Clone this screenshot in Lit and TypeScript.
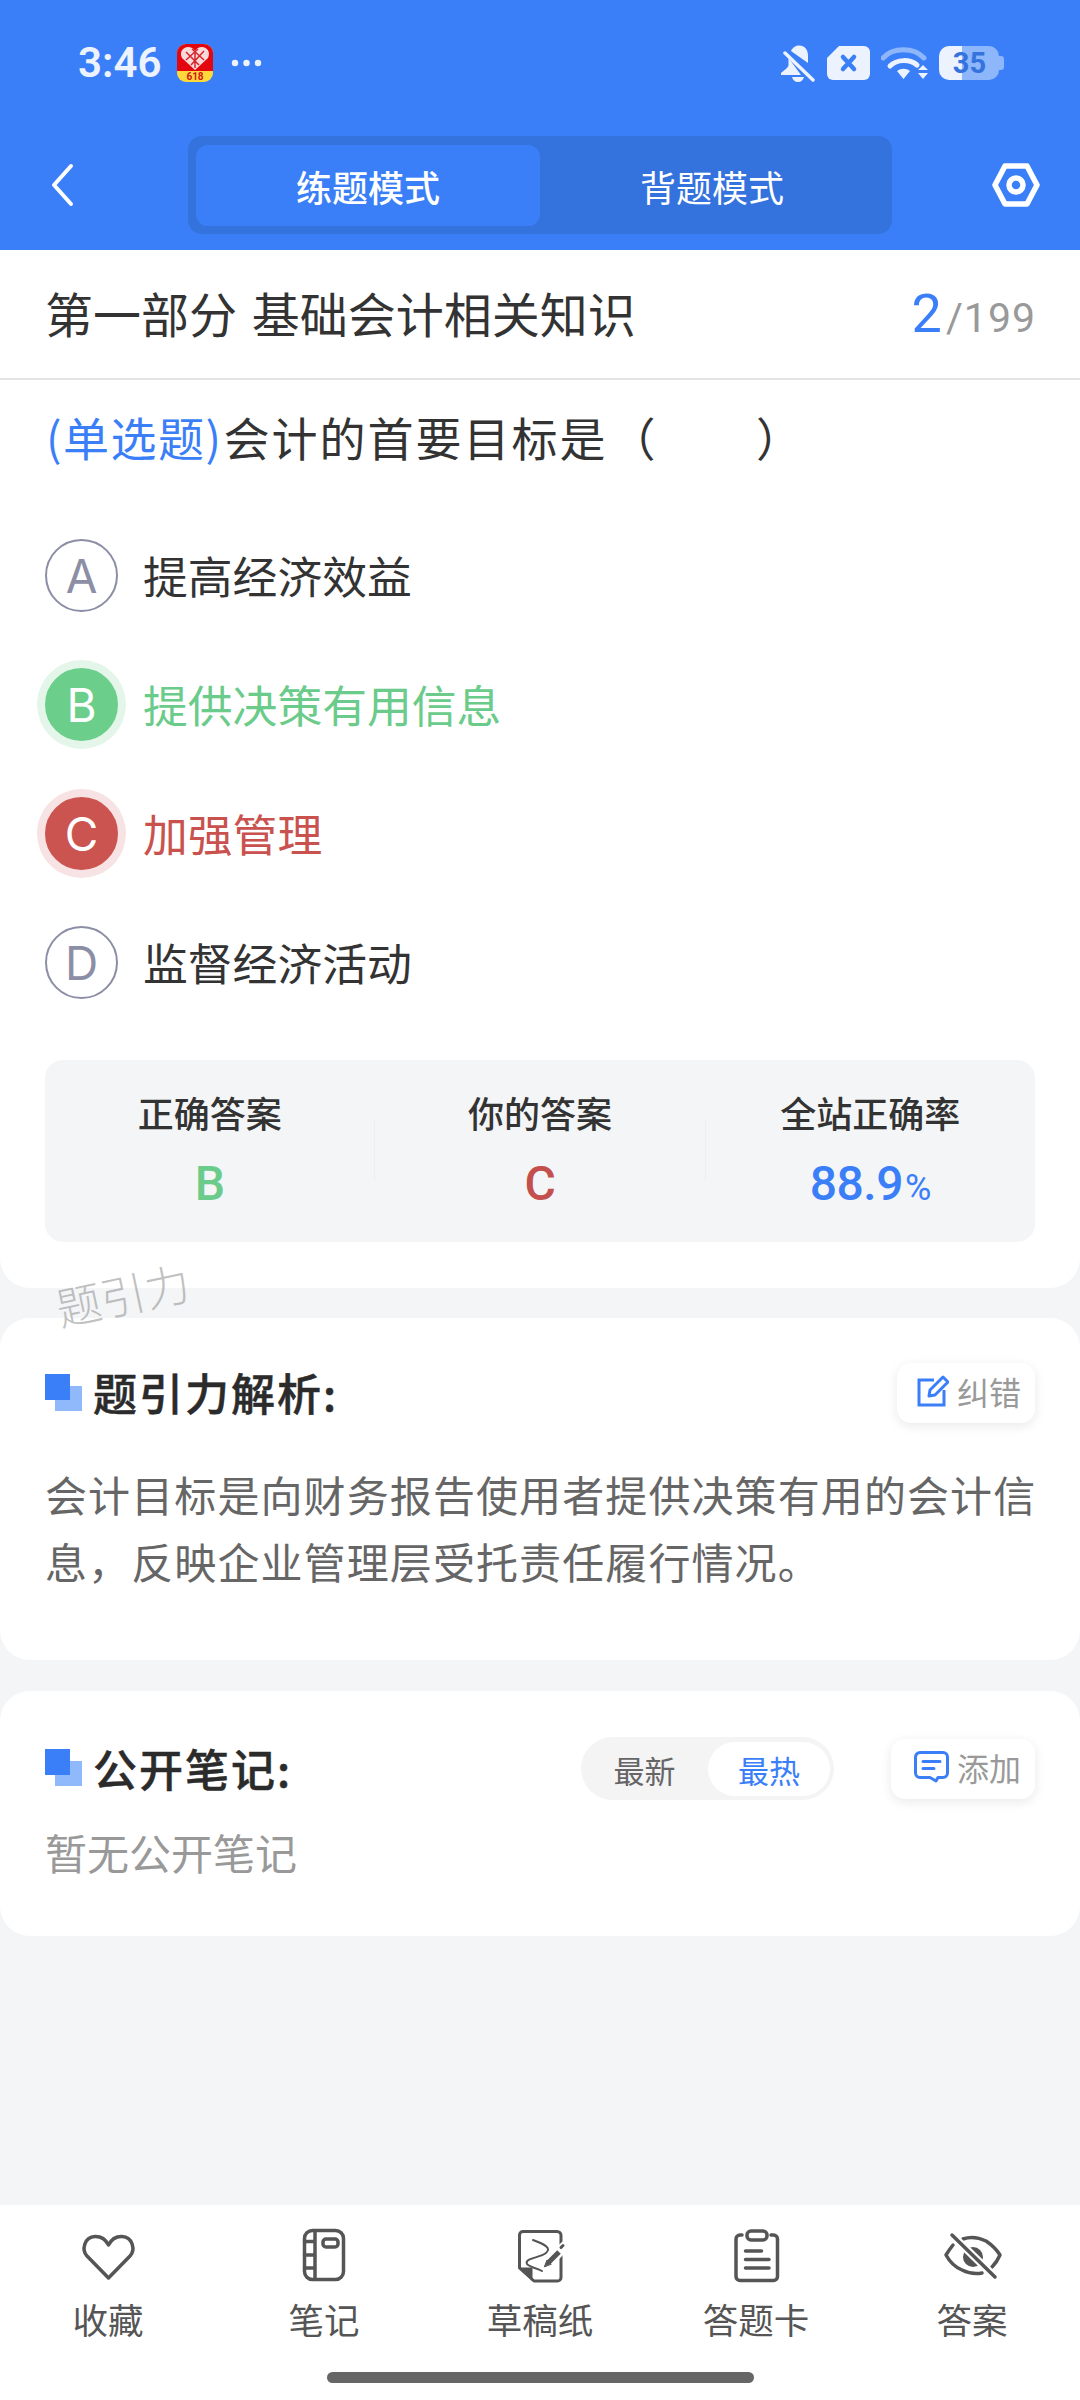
import { LitElement, html, css, svg } from 'lit';
import { customElement } from 'lit/decorators.js';

const OPTIONS = [
  { key: 'A', text: '提高经济效益', state: '' },
  { key: 'B', text: '提供决策有用信息', state: 'right' },
  { key: 'C', text: '加强管理', state: 'wrong' },
  { key: 'D', text: '监督经济活动', state: '' },
];

const NAV_ICONS = {
  heart: svg`<path d="M30.5 52 L9 30 C3.5 24 6 11 17 10.500 C23 10.300 28 14 30.500 19 C33 14 38 10.300 44 10.500 C55 11 57.500 24 52 30 Z"/>`,
  book: svg`<rect x="10.500" y="4.500" width="39" height="49" rx="8"/><path d="M21 5V53M10.500 15.500H21M10.500 29H21M10.500 42H21"/><rect x="29" y="13" width="15" height="8" rx="3"/>`,
  sketch: svg`<path d="M13 5.500H47a4 4 0 0 1 4 4V51.500a3.500 3.500 0 0 1-3.500 3.500H24L9.500 42V9a3.500 3.500 0 0 1 3.500-3.500Z" stroke-width="3"/>
    <path d="M10 42H22V54Z" fill="#555" stroke-width="1"/>
    <path d="M23 14C34 18 42 22 36 27C30 32 14 32 17 38C19 41 27 42 32 45" stroke-width="2"/>
    <path d="M38 37L55 20" stroke="#fff" stroke-width="10"/>
    <path d="M39 36L49 26" stroke-width="5" stroke-linecap="butt"/>
    <path d="M34.500 40.500L37 34L41 38Z" fill="#555" stroke-width="1"/>
    <path d="M51 21.500L53 19.500" stroke-width="3"/>`,
  clipboard: svg`<path d="M16 9H14a4 4 0 0 0-4 4V50.500a4 4 0 0 0 4 4H47.500a4 4 0 0 0 4-4V13a4 4 0 0 0-4-4H45"/>
    <rect x="21" y="5" width="20" height="9" rx="4"/>
    <path d="M19.500 25H35.500M19.500 33.500H43M19.500 42H43"/>`,
  eye: svg`<path d="M21 13Q32 9 44 15Q53 21 58 29Q55 36 50 41M11 19Q7 24 4 29Q10 40 20 44Q30 49 40 47"/>
    <circle cx="31" cy="31" r="10" fill="#555" stroke="none"/>
    <path d="M10 9L53 51" stroke="#fff" stroke-width="8"/>
    <path d="M10 9L53 51"/>`,
};

const NAV = [
  { icon: NAV_ICONS.heart, label: '收藏' },
  { icon: NAV_ICONS.book, label: '笔记' },
  { icon: NAV_ICONS.sketch, label: '草稿纸' },
  { icon: NAV_ICONS.clipboard, label: '答题卡' },
  { icon: NAV_ICONS.eye, label: '答案' },
];

@customElement('app-root')
export class AppRoot extends LitElement {
  static styles = css`
    :host {
      display: flex;
      flex-direction: column;
      position: relative;
      width: 1080px;
      height: 2400px;
      overflow: hidden;
      background: #f4f5f7;
      color: #333;
      font-family: "Noto Sans CJK SC", "Noto Sans", sans-serif;
    }
    svg { display: block; flex: none; }

    .header { height: 250px; background: #3b7ff8; flex: none; }
    .status { height: 136px; box-sizing: border-box; display: flex; align-items: center; padding: 0 76px 10px 78px; color: #edf3fe; }
    .time { font: 600 42px/1 Roboto, sans-serif; width: 82px; margin-right: 17px; }
    .dots { margin-left: 18px; }
    .status-right { margin-left: auto; display: flex; align-items: center; gap: 11px; }

    .toolbar { height: 98px; display: flex; justify-content: space-between; align-items: center; padding: 0 34px; }
    .tabs { width: 704px; height: 98px; box-sizing: border-box; padding: 9px 8px 8px; display: flex; background: #3472dd; border-radius: 14px; }
    .tab { flex: 1; display: flex; align-items: center; justify-content: center; color: #fff; font-size: 36px; border-radius: 12px; }
    .tab.on { background: #3b7ff8; font-weight: 500; }

    .card { background: #fff; border-radius: 30px; flex: none; }
    .first { border-radius: 0 0 30px 30px; padding-bottom: 46px; }

    .part { height: 130px; box-sizing: border-box; border-bottom: 2px solid #e2e3e5; padding: 0 44px 4px 45px; display: flex; align-items: center; justify-content: space-between; font-size: 48px; word-spacing: 4px; }
    .count { display: flex; align-items: baseline; margin-top: 4px; font: 400 41px/1 Roboto, sans-serif; letter-spacing: 1px; color: #999; }
    .count b { font-weight: 400; font-size: 54px; color: #3b7ff8; margin-right: 3px; }

    .question { padding-left: 46px; height: 119px; line-height: 113px; font-size: 46px; letter-spacing: 2px; white-space: pre; margin-bottom: 12px; }
    .question .kind { color: #3b7ff8; letter-spacing: 1.500px; margin-right: 1px; }
    .question .paren { margin-left: 2px; }

    .option { height: 129px; display: flex; align-items: center; padding-left: 45px; gap: 25px; font-size: 44.800px; }
    .option-text { padding-bottom: 3px; }
    .mark { width: 73px; height: 73px; box-sizing: border-box; border-radius: 50%; border: 2px solid #8c8ea6; color: #8c8ea6; display: flex; align-items: center; justify-content: center; font: 400 46px/1 Inter, sans-serif; }
    .option.right { color: #6acb8a; }
    .option.right .mark { background: #6bcf8b; border-color: #6bcf8b; color: #fff; box-shadow: 0 0 0 8px #e4f6ea; }
    .option.wrong { color: #c9524f; }
    .option.wrong .mark { background: #cb5450; border-color: #cb5450; color: #fff; box-shadow: 0 0 0 8px #f7e3e3; }

    .stats { margin: 33px 45px 0; height: 182px; background: #f4f5f7; border-radius: 18px; display: grid; grid-template-columns: 1fr 1px 1fr 1px 1fr; }
    .stat { text-align: center; padding-top: 27px; }
    .stat-label { font-size: 36px; line-height: 50px; font-weight: 500; }
    .stat-value { margin-top: 12px; font: 500 48px/70px Roboto, sans-serif; letter-spacing: -0.500px; }
    .stat-value small { font-size: 36px; font-weight: 400; margin-left: 2px; }
    .rule { background: #eceef0; height: 60px; margin-top: 61px; }
    .green { color: #6acb8a; }
    .red { color: #c4504e; }
    .blue { color: #3b7ff8; }

    .second { margin-top: 30px; height: 342px; padding: 45px 45px 0; box-sizing: border-box; }
    .third { margin-top: 31px; height: 245px; padding: 46px 45px 0; box-sizing: border-box; }
    .row { display: flex; align-items: center; }
    .heading { display: flex; align-items: center; gap: 11px; padding-bottom: 2px; font-size: 44px; line-height: 50px; font-weight: 500; letter-spacing: 2px; color: #2b2b2b; -webkit-text-stroke: 0.500px #2b2b2b; }
    .tool { display: flex; align-items: center; height: 60px; box-sizing: border-box; border-radius: 14px; background: #fff; box-shadow: 0 3px 12px rgba(0, 0, 0, .09); color: #999; font-size: 32px; padding: 0 14px 4px 20px; gap: 8px; }
    .second .tool { margin-left: auto; }
    .third .tool { padding-left: 23px; }
    .analysis { margin: 37px -6px 0 0; font-size: 42px; line-height: 67px; letter-spacing: 1.100px; color: #666; }
    .empty { margin: 22px 0 0; font-size: 42px; line-height: 60px; color: #999; }

    .switch { margin-left: auto; margin-right: 57px; width: 253px; height: 63px; box-sizing: border-box; padding: 5px 4px 4px 0; display: flex; border-radius: 32px; background: #f4f4f5; font-size: 31px; color: #666; }
    .switch div { flex: 1; display: flex; align-items: center; justify-content: center; border-radius: 27px; }
    .switch .on { background: #fff; color: #3b7ff8; flex: none; width: 122px; }

    .spacer { flex: 1; }

    .nav { height: 195px; flex: none; background: #fff; display: flex; flex-direction: column; align-items: center; padding-top: 21px; box-sizing: border-box; }
    .nav-items { align-self: stretch; display: grid; grid-template-columns: repeat(5, 216px); }
    .nav-item { display: flex; flex-direction: column; align-items: center; gap: 8px; color: #555; font-size: 35.500px; line-height: 50px; }
    .nav-item svg { fill: none; stroke: #555; stroke-width: 3.500; stroke-linecap: round; stroke-linejoin: round; }
    .home { margin-top: 28px; width: 427px; height: 11px; border-radius: 6px; background: #666; }

    .watermark { position: absolute; left: 55px; top: 1264px; font-size: 45px; font-weight: 300; line-height: 60px; color: rgba(140, 140, 140, .55); transform: rotate(-12deg); }
  `;

  private squares() {
    return html`<svg width="37" height="37" viewBox="0 0 37 37">
      <rect x="10" y="12" width="27" height="25" fill="#8fb9fb"/>
      <rect x="0" y="0" width="25" height="26" fill="#3b7ff8"/>
    </svg>`;
  }

  private statusBar() {
    return html`<div class="status">
      <div class="time">3:46</div>
      <svg width="36" height="38" viewBox="0 0 36 38">
        <rect width="36" height="38" rx="9" fill="#ffd93a"/>
        <path d="M0 27V9a9 9 0 0 1 9-9H27a9 9 0 0 1 9 9V27Z" fill="#e4060f"/>
        <path d="M18 26L5 14C2 8 6 3 11 3C14 3 16.500 4.500 18 7C19.500 4.500 22 3 25 3C30 3 34 8 31 14Z" fill="#f8dada"/>
        <path d="M9 8L22 21M15 5L27 16M27 7L14 21M21 5L9 16M18 9V24" stroke="#d8242c" stroke-width="1.500" fill="none"/>
        <text x="18" y="36" text-anchor="middle" font-family="Roboto, sans-serif" font-weight="700" font-size="10" fill="#d0141c">618</text>
      </svg>
      <svg class="dots" width="31" height="8" viewBox="0 0 31 8" fill="#edf3fe">
        <circle cx="4" cy="4" r="3.200"/><circle cx="15.500" cy="4" r="3.200"/><circle cx="27" cy="4" r="3.200"/>
      </svg>
      <div class="status-right">
        <svg width="36" height="38" viewBox="0 0 36 38" fill="#edf3fe">
          <path d="M5 9L33 36" stroke="#edf3fe" stroke-width="3.500" stroke-linecap="round"/>
          <path d="M11 7C13 3 16 1.500 19 1.500C25 1.500 28 6 28 12V19Z"/>
          <path d="M8.500 14V21C8.500 24 4 26 1 29V31H21Z"/>
          <path d="M12 33H24C23 36.500 21 38 18 38C15 38 13 36.500 12 33Z"/>
        </svg>
        <svg width="43" height="34" viewBox="0 0 43 34">
          <path d="M12 0H37a6 6 0 0 1 6 6V28a6 6 0 0 1-6 6H6a6 6 0 0 1-6-6V12Z" fill="#edf3fe"/>
          <path d="M16 11L27 23M27 11L16 23" stroke="#3b7ff8" stroke-width="4.500" stroke-linecap="round"/>
        </svg>
        <svg width="47" height="33" viewBox="0 0 47 33" fill="none" stroke-linecap="round">
          <path d="M2 11C12 0 33 0 43 11" stroke="#8db6fb" stroke-width="5"/>
          <path d="M9 19C16 12 29 12 36 18" stroke="#edf3fe" stroke-width="5"/>
          <path d="M16 24L22.500 32L29 24C25 21 20 21 16 24Z" fill="#edf3fe"/>
          <path d="M37 23L42 18L47 23ZM37 26H47L42 32Z" fill="#edf3fe"/>
        </svg>
        <svg width="65" height="34" viewBox="0 0 65 34">
          <path d="M23 0H50a10 10 0 0 1 10 10V24a10 10 0 0 1-10 10H23Z" fill="#8db6fb"/>
          <path d="M10 0H23V34H10A10 10 0 0 1 0 24V10A10 10 0 0 1 10 0Z" fill="#edf3fe"/>
          <path d="M60 10H62a3 3 0 0 1 3 3V21a3 3 0 0 1-3 3H60Z" fill="#8db6fb"/>
          <text x="30.500" y="27" text-anchor="middle" font-family="Roboto, sans-serif" font-weight="700" font-size="29" fill="#3472dd">35</text>
        </svg>
      </div>
    </div>`;
  }

  render() {
    return html`
      <div class="header">
        ${this.statusBar()}
        <div class="toolbar">
          <svg width="60" height="60" viewBox="0 0 60 60" fill="none" stroke="#fff" stroke-width="4" stroke-linecap="round" stroke-linejoin="round">
            <path d="M37 11L20 30L37 49"/>
          </svg>
          <div class="tabs">
            <div class="tab on">练题模式</div>
            <div class="tab">背题模式</div>
          </div>
          <svg width="60" height="60" viewBox="0 0 60 60" fill="none" stroke="#fff" stroke-width="5.500" stroke-linejoin="round">
            <path d="M9 30L19 11H41L51 30L41 49H19Z"/>
            <circle cx="30" cy="30" r="7"/>
          </svg>
        </div>
      </div>

      <div class="card first">
        <div class="part">
          <div>第一部分 基础会计相关知识</div>
          <div class="count"><b>2</b>/199</div>
        </div>
        <div class="question"><span class="kind">(单选题)</span>会计的首要目标是<span class="paren">（        ）</span></div>
        ${OPTIONS.map(o => html`<div class="option ${o.state}">
          <div class="mark">${o.key}</div>
          <div class="option-text">${o.text}</div>
        </div>`)}
        <div class="stats">
          <div class="stat"><div class="stat-label">正确答案</div><div class="stat-value green">B</div></div>
          <div class="rule"></div>
          <div class="stat"><div class="stat-label">你的答案</div><div class="stat-value red">C</div></div>
          <div class="rule"></div>
          <div class="stat"><div class="stat-label">全站正确率</div><div class="stat-value blue">88.9<small>%</small></div></div>
        </div>
      </div>

      <div class="card second">
        <div class="row">
          <div class="heading">${this.squares()}题引力解析:</div>
          <div class="tool">
            <svg width="32" height="32" viewBox="0 0 32 32" fill="none" stroke="#3b7ff8" stroke-width="3">
              <path d="M17 5H2V30H27V15"/>
              <path d="M12 21L13 15L26 2L31 7L18 20Z" stroke-linejoin="round"/>
            </svg>
            纠错
          </div>
        </div>
        <p class="analysis">会计目标是向财务报告使用者提供决策有用的会计信息，反映企业管理层受托责任履行情况。</p>
      </div>

      <div class="card third">
        <div class="row">
          <div class="heading">${this.squares()}公开笔记:</div>
          <div class="switch"><div>最新</div><div class="on">最热</div></div>
          <div class="tool">
            <svg width="35" height="32" viewBox="0 0 35 32" fill="none" stroke="#3b7ff8" stroke-width="3" stroke-linecap="round" stroke-linejoin="round">
              <path d="M6 1.500H29a4.500 4.500 0 0 1 4.500 4.500V22a4.500 4.500 0 0 1-4.500 4.500H24L22 30L16 26.500H6A4.500 4.500 0 0 1 1.500 22V6A4.500 4.500 0 0 1 6 1.500Z"/>
              <path d="M9 10.500H26M9 17.500H20"/>
            </svg>
            添加
          </div>
        </div>
        <p class="empty">暂无公开笔记</p>
      </div>

      <div class="spacer"></div>

      <div class="nav">
        <div class="nav-items">
          ${NAV.map(n => html`<div class="nav-item">
            <svg width="60" height="60" viewBox="0 0 60 60">${n.icon}</svg>
            <div>${n.label}</div>
          </div>`)}
        </div>
        <div class="home"></div>
      </div>

      <div class="watermark">题引力</div>
    `;
  }
}
